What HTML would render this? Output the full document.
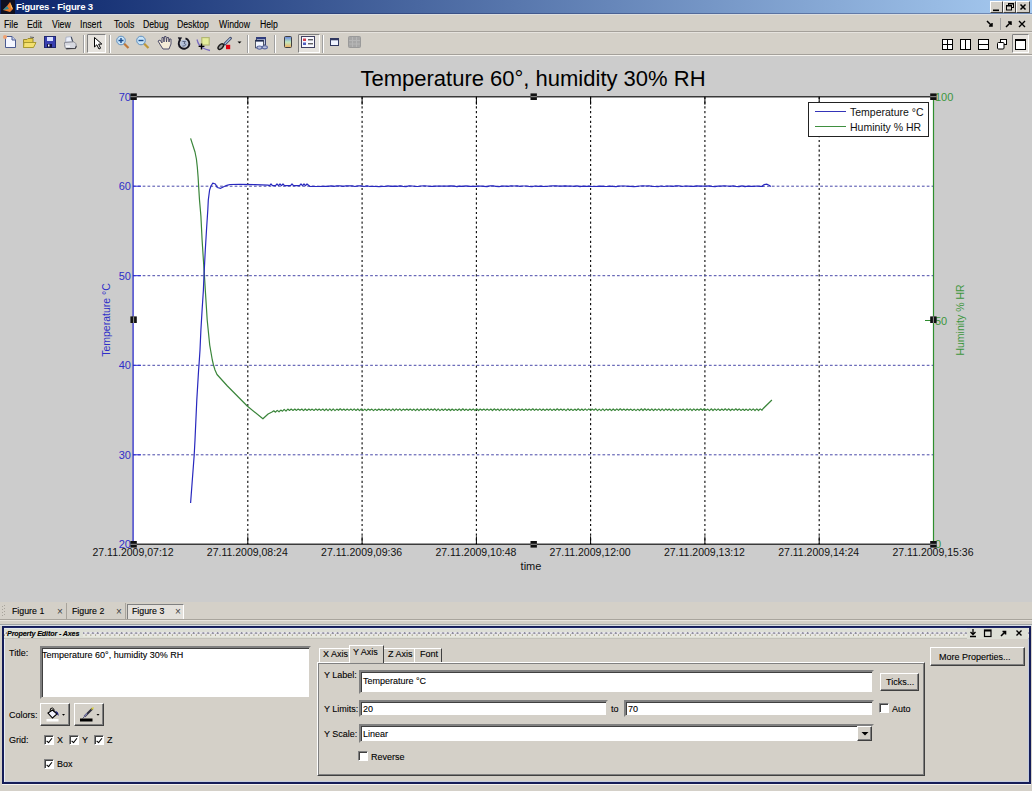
<!DOCTYPE html>
<html><head><meta charset="utf-8">
<style>
*{margin:0;padding:0;box-sizing:border-box}
html,body{width:1032px;height:791px;overflow:hidden;background:#D4D0C8;font-family:"Liberation Sans",sans-serif;font-size:11px;color:#000}
#menubar,#pe,#tabs{-webkit-text-stroke:0.1px #000}
.a{position:absolute}
#titlebar{left:0;top:0;width:1032px;height:14px;background:linear-gradient(to right,#0A246A,#A6CAF0);box-shadow:inset 0 -1px 0 rgba(20,30,80,0.35)}
#menubar{left:0;top:14px;width:1032px;height:18px;background:#D4D0C8;border-bottom:1px solid #A4A09A;border-top:1px solid #DCDEE0}
#toolbar{left:0;top:32px;width:1032px;height:23px;background:#D4D0C8;border-top:1px solid #E6E3DE;border-bottom:1px solid #A4A09A}
#fig{left:0;top:56px;width:1032px;height:546px;background:#CCCCCC;border-top:0}
#figline{left:0;top:55px;width:1032px;height:1px;background:#F4F2EE}
#tabs{left:0;top:602px;width:1032px;height:21px;background:#D4D0C8}
#pe{left:2px;top:626px;width:1029px;height:158px;border:2px solid #141C58;border-top-width:1px;background:#D4D0C8;box-shadow:inset 1px 1px 0 #E8ECF4, inset -1px -1px 0 #C4CCE0, 0 1px 0 #F4F2EE}
.menu span{position:absolute;top:4px;font-size:10px;line-height:11px;transform:scaleX(0.87);transform-origin:0 0}
.wb{width:13px;height:11px;background:#D4D0C8;border:1px solid;border-color:#fff #404040 #404040 #fff}
.wb svg{position:absolute;left:0;top:0}

#peh{left:0;top:0;width:1025px;height:12px;background:#DDDFD6;border-top:1px solid #1E2666;border-bottom:1px solid #C4C2BA;box-shadow:inset 0 1px 0 #E4E8EE}
#peh::after{content:"";position:absolute;left:0;top:4px;width:100%;height:5px;background-image:radial-gradient(circle at 2.5px 1.2px,#8C8A9C 0.8px,transparent 1.3px),radial-gradient(circle at 0px 3.3px,#A2A288 0.8px,transparent 1.3px),linear-gradient(#E8E6EE,#E8E8DC);background-size:4.8px 5px,4.8px 5px,100% 100%}
#pe{font-size:9px}
#pe .lbl{position:absolute;line-height:10px;white-space:nowrap}
.fld{position:absolute;background:#fff;border:2px solid;border-color:#808080 #D4D0C8 #D4D0C8 #808080;box-shadow:inset 1px 1px 0 #404040;line-height:10px;white-space:nowrap;overflow:hidden}
.btn{position:absolute;background:#D4D0C8;border:1px solid;border-color:#fff #404040 #404040 #fff;box-shadow:inset -1px -1px 0 #808080;line-height:10px;white-space:nowrap}
.cb{position:absolute;width:10px;height:10px;background:#fff;border:1px solid;border-color:#808080 #fff #fff #808080;box-shadow:inset 1px 1px 0 #404040}
.cb.on::after{content:"";position:absolute;left:2.5px;top:0.5px;width:2px;height:4.5px;border:solid #000;border-width:0 1.8px 1.8px 0;transform:rotate(38deg)}
.tab{position:absolute;background:#D4D0C8;border-top:1px solid #fff;border-left:1px solid #fff;line-height:10px}
.tab span{position:absolute;top:0px;white-space:nowrap}
.tab.sel{border-right:1px solid #404040;z-index:2}
.pane{position:absolute;border:1px solid;border-color:#fff #404040 #404040 #fff;box-shadow:inset -1px -1px 0 #808080, inset 1px 1px 0 #808080}
#tabs .t{position:absolute;top:4px;font-size:8.8px;line-height:11px}
#tabs .tx{position:absolute;top:3.5px;font-size:10px;line-height:11px;color:#404040;-webkit-text-stroke:0}
#tabs .tsep{position:absolute;top:1px;width:1px;height:16px;background:#A8A49C}
#tabs .tsel{position:absolute;left:127px;top:2px;width:57px;height:16px;border:1px solid;border-color:#808080 #fff #fff #808080;background:#E4E1DC}
</style></head><body>
<div id="titlebar" class="a">
<svg class="a" style="left:1px;top:0" width="14" height="14"><rect x="0" y="0" width="14" height="14" fill="#101020"/><path d="M2,10 L6,6 L9,2 L12,9 L9,12 Z" fill="#E8782A"/><path d="M2,10 L6,6 L8,9 Z" fill="#2A8A9A"/><path d="M9,2 L12,9 L10,8 Z" fill="#F8C060"/></svg>
<div class="a" style="left:16px;top:1px;font-size:9.6px;font-weight:bold;color:#fff;letter-spacing:-0.2px;line-height:12px">Figures - Figure 3</div>
<div class="a wb" style="left:990px;top:1px;height:12px"><svg width="12" height="10"><rect x="2" y="7.5" width="6" height="1.6" fill="#000"/></svg></div>
<div class="a wb" style="left:1003px;top:1px;height:12px"><svg width="12" height="10"><rect x="4.5" y="1.5" width="5" height="4" fill="none" stroke="#000"/><rect x="2.5" y="3.5" width="5" height="4.5" fill="#D4D0C8" stroke="#000"/><rect x="2" y="3" width="6" height="1.5" fill="#000"/><rect x="4" y="1" width="6" height="1.5" fill="#000"/></svg></div>
<div class="a wb" style="left:1016px;top:1px;width:14px;height:12px"><svg width="12" height="10"><path d="M3.5,2.5 L8.5,7.5 M8.5,2.5 L3.5,7.5" stroke="#000" stroke-width="1.5"/></svg></div>
</div>
<div id="menubar" class="a menu">
<span style="left:4px">File</span>
<span style="left:27px">Edit</span>
<span style="left:52px">View</span>
<span style="left:80px">Insert</span>
<span style="left:114px">Tools</span>
<span style="left:143px">Debug</span>
<span style="left:177px">Desktop</span>
<span style="left:219px">Window</span>
<span style="left:260px">Help</span>
<svg class="a" style="left:984px;top:3px" width="48" height="12">
<path d="M3,3 L8,8 M5,8 L8,8 L8,5" stroke="#000" stroke-width="1.5" fill="none"/>
<line x1="16.5" y1="0" x2="16.5" y2="12" stroke="#A0A0A0"/>
<path d="M22,9 L27,4 M24,4 L27,4 L27,7" stroke="#000" stroke-width="1.5" fill="none"/>
<path d="M35,3 L41,9 M41,3 L35,9" stroke="#000" stroke-width="1.4"/>
</svg>
</div>
<div id="toolbar" class="a">
<svg class="a" style="left:0;top:0" width="380" height="23" viewBox="0 32 380 23">
<line x1="83.5" y1="34" x2="83.5" y2="52" stroke="#A0A0A0"/><line x1="84.5" y1="34" x2="84.5" y2="52" stroke="#fff"/>
<rect x="87.5" y="33.5" width="18" height="18" fill="#E6E3DE" stroke="#FFFFFF"/>
<path d="M87.5,51.5 L87.5,33.5 L105.5,33.5" fill="none" stroke="#808080"/>
<line x1="109.5" y1="34" x2="109.5" y2="52" stroke="#A0A0A0"/><line x1="110.5" y1="34" x2="110.5" y2="52" stroke="#fff"/>
<line x1="247.5" y1="34" x2="247.5" y2="52" stroke="#A0A0A0"/><line x1="248.5" y1="34" x2="248.5" y2="52" stroke="#fff"/>
<line x1="274.5" y1="34" x2="274.5" y2="52" stroke="#A0A0A0"/><line x1="275.5" y1="34" x2="275.5" y2="52" stroke="#fff"/>
<defs><linearGradient id="cb" x1="0" y1="0" x2="0" y2="1"><stop offset="0" stop-color="#6080E0"/><stop offset="0.5" stop-color="#C0E8C0"/><stop offset="1" stop-color="#F0B060"/></linearGradient></defs>
<rect x="298.5" y="33.5" width="21" height="18" fill="#E6E3DE" stroke="#FFFFFF"/>
<path d="M298.5,51.5 L298.5,33.5 L319.5,33.5" fill="none" stroke="#808080"/>
<line x1="322.5" y1="34" x2="322.5" y2="52" stroke="#A0A0A0"/><line x1="323.5" y1="34" x2="323.5" y2="52" stroke="#fff"/>
<g transform="translate(0,-1)">
<!-- new -->
<path d="M5.5,36.5 L12,36.5 L15.5,40 L15.5,47.5 L5.5,47.5 Z" fill="#F4F6FF" stroke="#4A5A90"/>
<path d="M12,36.5 L12,40 L15.5,40" fill="#C8D0F0" stroke="#4A5A90"/>
<circle cx="5" cy="37" r="2" fill="#F0A070"/>
<!-- open -->
<path d="M23.5,39.5 L27,39.5 L28,38.5 L33,38.5 L33,47.5 L23.5,47.5 Z" fill="#E8D050" stroke="#9A8A30"/>
<path d="M24,42.5 L36,42.5 L33.5,47.5 L23.5,47.5 Z" fill="#F4E070" stroke="#A89A30"/>
<path d="M30,37 L34,37.5" stroke="#606060" stroke-width="1"/>
<!-- save -->
<rect x="44.5" y="36.5" width="11" height="11" fill="#3A40B0" stroke="#202870"/>
<rect x="47" y="37" width="6" height="4" fill="#D8E0FF"/>
<rect x="47" y="44" width="5" height="3.5" fill="#101040"/>
<rect x="48" y="44.5" width="1.5" height="2" fill="#fff"/>
<!-- print -->
<path d="M66,37.2 L71.2,36.6 L72.8,41.8 L65.6,42.2 Z" fill="#ECF0FA" stroke="#A0A8C0" stroke-width="0.8"/>
<path d="M71.2,36.8 L72.8,41.8" stroke="#404858" stroke-width="1.1"/>
<path d="M64.5,42.5 L74,41.8 Q76.6,43.4 76.4,46.2 L75.4,48.6 L66.2,49 Q64.4,47.4 64.5,44.5 Z" fill="#D6D8E0" stroke="#84868E" stroke-width="0.9"/>
<path d="M66.2,48.6 L75.4,48.3 L76.3,46" fill="none" stroke="#3E3E44" stroke-width="1.1"/>
<rect x="66" y="45.6" width="4" height="1.2" fill="#FFFFFF"/>
<!-- separator -->
<!-- pressed pointer button -->
<path d="M94.5,37.5 L94.5,47 L96.8,44.8 L99,49 L100.6,48.2 L98.6,44.2 L101.8,44 Z" fill="#fff" stroke="#000" stroke-width="1"/>
<!-- zoom in -->
<line x1="124" y1="43.5" x2="128.5" y2="48" stroke="#C07838" stroke-width="2.2"/>
<circle cx="121" cy="40.5" r="4.3" fill="#C8E4F8" stroke="#6090C0" stroke-width="1"/>
<path d="M118.5,40.5 L123.5,40.5 M121,38 L121,43" stroke="#1A4A8A" stroke-width="1.4"/>
<!-- zoom out -->
<line x1="144" y1="43.5" x2="148.5" y2="48" stroke="#C09838" stroke-width="2.2"/>
<circle cx="141" cy="40.5" r="4.3" fill="#C8E4F8" stroke="#6090C0" stroke-width="1"/>
<path d="M138.5,40.5 L143.5,40.5" stroke="#1A4A8A" stroke-width="1.4"/>
<!-- pan hand -->
<path d="M158,41 L161,46 L163,49 L169,49 L171,44 L171,39 L169.5,39 L169,42 L168.5,37.5 L167,37.5 L166.5,42 L166,36.5 L164.5,36.5 L164,42 L163.5,37.5 L162,37.5 L162,43 L160,40 Z" fill="#F4ECD8" stroke="#404060" stroke-width="0.9"/>
<!-- rotate -->
<circle cx="184" cy="43.5" r="3.8" fill="#B4C0D8"/>
<path d="M185.5,38.4 A5.3,5.3 0 1 1 180.25,39.75" fill="none" stroke="#151520" stroke-width="1.9"/>
<path d="M177.8,37.2 L182.2,37.6 L179.6,41.2 Z" fill="#151520"/>
<path d="M182.5,41.5 L185.5,41.5 L184,43.2 L185.8,44.5 L184.5,46 L182.5,46" fill="none" stroke="#5A6480" stroke-width="1"/>
<!-- data cursor -->
<rect x="201.8" y="37.6" width="7.4" height="7.4" fill="#E4EC9C" stroke="#B0B470" stroke-width="1.1"/>
<path d="M197,39.5 Q198.5,45.5 202,47.5 Q205.5,49.5 210,50.5" fill="none" stroke="#7A6CC0" stroke-width="1.3"/>
<path d="M198.6,46.4 L204.4,46.4 M201.5,43.5 L201.5,49.5" stroke="#000" stroke-width="1.4"/>
<!-- brush -->
<path d="M230.5,38.2 L224.8,44" stroke="#3A4060" stroke-width="2.8" stroke-linecap="round"/>
<path d="M230.2,38.5 L225.2,43.6" stroke="#A8C4E4" stroke-width="1.2" stroke-linecap="round"/>
<ellipse cx="220.8" cy="46.6" rx="3.4" ry="1.9" transform="rotate(-45 220.8 46.6)" fill="#9A9A9A" stroke="#1A1A1A" stroke-width="1.4"/>
<rect x="226" y="44.8" width="4.2" height="4.4" fill="#E00010"/>
<path d="M237.5,41.5 L241.5,41.5 L239.5,43.5 Z" fill="#000"/>
<!-- link -->
<rect x="256.5" y="37.5" width="9" height="7.5" fill="#C4CCE4" stroke="#3A4470" stroke-width="1"/>
<rect x="256.5" y="37.2" width="9" height="2" fill="#2E3C80"/>
<rect x="255.5" y="40.3" width="8" height="7.5" fill="#F2F6FF" stroke="#404858" stroke-width="0.9"/>
<rect x="255.5" y="40" width="8" height="1.6" fill="#1E2A50"/>
<ellipse cx="259.5" cy="47.6" rx="2.6" ry="1.6" fill="#B8C0DC" stroke="#5A68A0" stroke-width="1.1"/>
<ellipse cx="264.8" cy="47.3" rx="2.6" ry="1.6" fill="#B8C0DC" stroke="#5A68A0" stroke-width="1.1"/>
<!-- colorbar -->
<rect x="284.5" y="36.5" width="7" height="11" rx="1" fill="url(#cb)" stroke="#404040"/>
<!-- pressed legend button -->
<rect x="301.5" y="36.5" width="13" height="11" fill="#F8F8FF" stroke="#404060"/>
<rect x="303" y="38.5" width="3" height="2.5" fill="#D04050"/><rect x="303" y="42.5" width="3" height="2.5" fill="#5060C0"/>
<path d="M308,39.8 L313,39.8 M308,43.8 L313,43.8" stroke="#202020"/>
<!-- hide plot tools -->
<rect x="330.5" y="38.5" width="8" height="7" fill="#F0F4FF" stroke="#303860"/>
<rect x="330.5" y="38.5" width="8" height="1.8" fill="#303860"/>
<!-- show plot tools (disabled gray) -->
<rect x="348.5" y="36.5" width="12" height="11" rx="1" fill="#A6A6A6" stroke="#9A9A9A"/>
<path d="M352.5,37 L352.5,47 M356.5,37 L356.5,47 M349,40.5 L360,40.5 M349,44 L360,44" stroke="#B6B6B6"/>
</g>
</svg>
<svg class="a" style="left:932px;top:0" width="100" height="23" viewBox="932 32 100 23">
<rect x="942.5" y="38.5" width="10" height="10" fill="#fff" stroke="#000"/><path d="M947.5,38.5 L947.5,48.5 M942.5,43.5 L952.5,43.5" stroke="#000"/>
<rect x="960.5" y="38.5" width="10" height="10" fill="#fff" stroke="#000"/><path d="M965.5,38.5 L965.5,48.5" stroke="#000"/>
<rect x="978.5" y="38.5" width="10" height="10" fill="#fff" stroke="#000"/><path d="M978.5,43.5 L988.5,43.5" stroke="#000"/>
<rect x="1000.5" y="38.5" width="6" height="5" fill="#fff" stroke="#000"/><rect x="997.5" y="41.5" width="6.5" height="6.5" rx="1" fill="#fff" stroke="#000"/>
<rect x="1012.5" y="33.5" width="16" height="18" fill="#E6E3DE" stroke="#FFFFFF"/>
<path d="M1012.5,51.5 L1012.5,33.5 L1028.5,33.5" fill="none" stroke="#808080"/>
<rect x="1015.5" y="38.5" width="10" height="10" fill="#fff" stroke="#000"/><rect x="1015.5" y="38.5" width="10" height="1.5" fill="#000"/>
</svg>
</div>

<div id="figline" class="a"></div>
<div id="fig" class="a">
<svg width="1032" height="546" viewBox="0 56 1032 546" style="position:absolute;left:0;top:0">
<rect x="133" y="96.7" width="800" height="447.59999999999997" fill="#fff"/>
<line x1="247.8" y1="96.7" x2="247.8" y2="544.3" stroke="#111" stroke-width="1.15" stroke-dasharray="2.2 2.6"/>
<line x1="362.1" y1="96.7" x2="362.1" y2="544.3" stroke="#111" stroke-width="1.15" stroke-dasharray="2.2 2.6"/>
<line x1="476.4" y1="96.7" x2="476.4" y2="544.3" stroke="#111" stroke-width="1.15" stroke-dasharray="2.2 2.6"/>
<line x1="590.6" y1="96.7" x2="590.6" y2="544.3" stroke="#111" stroke-width="1.15" stroke-dasharray="2.2 2.6"/>
<line x1="704.9" y1="96.7" x2="704.9" y2="544.3" stroke="#111" stroke-width="1.15" stroke-dasharray="2.2 2.6"/>
<line x1="819.2" y1="96.7" x2="819.2" y2="544.3" stroke="#111" stroke-width="1.15" stroke-dasharray="2.2 2.6"/>
<line x1="133" y1="186.2" x2="933" y2="186.2" stroke="#4848A8" stroke-width="1" stroke-dasharray="2.7 2.14"/>
<line x1="133" y1="275.7" x2="933" y2="275.7" stroke="#4848A8" stroke-width="1" stroke-dasharray="2.7 2.14"/>
<line x1="133" y1="365.3" x2="933" y2="365.3" stroke="#4848A8" stroke-width="1" stroke-dasharray="2.7 2.14"/>
<line x1="133" y1="454.8" x2="933" y2="454.8" stroke="#4848A8" stroke-width="1" stroke-dasharray="2.7 2.14"/>
<path d="M190.6,138.4 L195.0,152.0 L196.4,159.0 L197.3,167.0 L198.1,177.0 L198.6,185.6 L199.5,200.0 L200.9,216.0 L202.1,240.0 L203.4,260.0 L204.7,280.0 L205.3,290.0 L207.2,320.0 L209.7,345.0 L212.3,360.0 L213.5,365.0 L215.0,370.0 L217.0,374.5 L227.4,386.0 L247.2,406.0 L262.9,418.8 L268.1,414.0 L272.0,412.0 L273.8,410.8 L275.5,412.2 L277.2,410.4 L279.0,411.8 L280.8,410.1 L282.5,411.2 L284.2,409.4 L286.0,411.1 L287.8,409.1 L289.5,410.4 L291.2,409.1 L293.0,410.4 L294.8,409.1 L296.5,410.4 L298.2,409.0 L300.0,410.3 L301.8,409.0 L303.5,410.6 L305.2,409.0 L307.0,410.5 L308.8,409.0 L310.5,410.3 L312.2,409.1 L314.0,410.5 L315.8,408.9 L317.5,410.3 L319.2,409.1 L321.0,410.4 L322.8,409.0 L324.5,410.6 L326.2,409.0 L328.0,410.6 L329.8,408.9 L331.5,410.6 L333.2,408.9 L335.0,410.6 L336.8,409.1 L338.5,410.3 L340.2,408.8 L342.0,410.3 L343.8,409.1 L345.5,410.4 L347.2,409.0 L349.0,410.4 L350.8,409.0 L352.5,410.4 L354.2,408.9 L356.0,410.5 L357.8,409.0 L359.5,410.6 L361.2,409.0 L363.0,410.6 L364.8,409.1 L366.5,410.6 L368.2,409.0 L370.0,410.3 L371.8,409.1 L373.5,410.6 L375.2,409.1 L377.0,410.5 L378.8,409.0 L380.5,410.3 L382.2,409.1 L384.0,410.5 L385.8,408.9 L387.5,410.3 L389.2,409.1 L391.0,410.6 L392.8,408.8 L394.5,410.6 L396.2,408.9 L398.0,410.3 L399.8,408.9 L401.5,410.6 L403.2,409.1 L405.0,410.3 L406.8,409.0 L408.5,410.3 L410.2,409.0 L412.0,410.4 L413.8,409.1 L415.5,410.6 L417.2,409.0 L419.0,410.6 L420.8,408.9 L422.5,410.3 L424.2,409.0 L426.0,410.3 L427.8,408.8 L429.5,410.4 L431.2,409.0 L433.0,410.3 L434.8,408.8 L436.5,410.6 L438.2,408.9 L440.0,410.6 L441.8,409.1 L443.5,410.4 L445.2,408.9 L447.0,410.5 L448.8,409.0 L450.5,410.5 L452.2,409.0 L454.0,410.5 L455.8,409.1 L457.5,410.5 L459.2,408.9 L461.0,410.5 L462.8,408.8 L464.5,410.4 L466.2,409.1 L468.0,410.5 L469.8,409.0 L471.5,410.3 L473.2,408.9 L475.0,410.5 L476.8,408.8 L478.5,410.5 L480.2,409.0 L482.0,410.3 L483.8,409.0 L485.5,410.4 L487.2,409.0 L489.0,410.4 L490.8,409.0 L492.5,410.5 L494.2,408.8 L496.0,410.3 L497.8,409.0 L499.5,410.6 L501.2,408.9 L503.0,410.4 L504.8,409.0 L506.5,410.4 L508.2,408.9 L510.0,410.4 L511.8,408.9 L513.5,410.5 L515.2,408.9 L517.0,410.4 L518.8,409.1 L520.5,410.3 L522.2,409.0 L524.0,410.5 L525.8,408.9 L527.5,410.3 L529.2,409.1 L531.0,410.3 L532.8,408.8 L534.5,410.4 L536.2,409.0 L538.0,410.3 L539.8,408.9 L541.5,410.4 L543.2,409.1 L545.0,410.4 L546.8,409.1 L548.5,410.3 L550.2,408.9 L552.0,410.5 L553.8,409.1 L555.5,410.4 L557.2,408.8 L559.0,410.3 L560.8,409.0 L562.5,410.3 L564.2,409.1 L566.0,410.6 L567.8,408.8 L569.5,410.4 L571.2,409.1 L573.0,410.5 L574.8,409.1 L576.5,410.4 L578.2,408.8 L580.0,410.4 L581.8,409.1 L583.5,410.4 L585.2,408.9 L587.0,410.4 L588.8,408.9 L590.5,410.4 L592.2,409.1 L594.0,410.3 L595.8,408.8 L597.5,410.6 L599.2,409.1 L601.0,410.6 L602.8,408.9 L604.5,410.6 L606.2,409.1 L608.0,410.3 L609.8,409.0 L611.5,410.6 L613.2,409.0 L615.0,410.5 L616.8,408.9 L618.5,410.4 L620.2,408.8 L622.0,410.3 L623.8,409.0 L625.5,410.4 L627.2,409.1 L629.0,410.3 L630.8,409.1 L632.5,410.5 L634.2,409.1 L636.0,410.6 L637.8,409.1 L639.5,410.5 L641.2,408.8 L643.0,410.5 L644.8,408.8 L646.5,410.4 L648.2,409.0 L650.0,410.5 L651.8,408.9 L653.5,410.6 L655.2,409.0 L657.0,410.4 L658.8,408.9 L660.5,410.6 L662.2,408.9 L664.0,410.6 L665.8,408.9 L667.5,410.3 L669.2,409.0 L671.0,410.6 L672.8,408.8 L674.5,410.6 L676.2,409.1 L678.0,410.6 L679.8,409.1 L681.5,410.3 L683.2,409.0 L685.0,410.6 L686.8,408.8 L688.5,410.4 L690.2,408.9 L692.0,410.5 L693.8,408.9 L695.5,410.4 L697.2,409.1 L699.0,410.3 L700.8,408.8 L702.5,410.3 L704.2,408.8 L706.0,410.3 L707.8,409.1 L709.5,410.6 L711.2,408.8 L713.0,410.5 L714.8,408.9 L716.5,410.4 L718.2,408.9 L720.0,410.5 L721.8,409.0 L723.5,410.4 L725.2,408.8 L727.0,410.4 L728.8,408.8 L730.5,410.5 L732.2,409.0 L734.0,410.4 L735.8,408.8 L737.5,410.3 L739.2,408.9 L741.0,410.5 L742.8,409.1 L744.5,410.4 L746.2,409.1 L748.0,410.5 L749.8,408.9 L751.5,410.4 L753.2,408.9 L755.0,410.5 L756.8,408.9 L758.5,410.5 L760.2,408.9 L762.0,410.3 L762.0,409.7 L771.9,400.0" fill="none" stroke="#3A853A" stroke-width="1.2" stroke-linejoin="round"/>
<path d="M190.6,503.0 L194.2,455.0 L195.0,440.0 L196.8,400.0 L198.6,370.0 L199.0,365.0 L200.0,350.0 L200.9,330.0 L202.1,310.0 L203.4,290.0 L204.0,275.0 L205.3,250.0 L206.5,230.0 L207.8,210.0 L208.3,200.0 L209.6,190.0 L211.0,186.0 L212.7,183.2 L215.4,184.0 L217.2,187.5 L220.7,188.3 L224.2,186.5 L226.9,185.3 L230.0,184.5 L240.0,184.3 L255.0,184.7 L268.0,185.2 L269.5,185.6 L271.0,184.0 L272.5,185.6 L274.0,185.6 L275.5,185.6 L277.0,184.0 L278.5,185.6 L280.0,184.0 L281.5,185.6 L283.0,184.0 L284.5,185.6 L286.0,185.6 L287.5,185.6 L289.0,185.6 L290.5,185.6 L292.0,184.0 L293.5,185.6 L295.0,185.6 L296.5,185.6 L298.0,185.6 L299.5,185.6 L301.0,184.0 L302.5,185.6 L304.0,184.0 L305.5,185.6 L307.0,184.0 L310.0,186.5 L313.0,186.3 L316.0,186.5 L319.0,186.5 L322.0,186.4 L325.0,186.4 L328.0,186.3 L331.0,185.8 L334.0,186.3 L337.0,185.8 L340.0,185.9 L343.0,186.4 L346.0,185.8 L349.0,185.8 L352.0,185.8 L355.0,186.5 L358.0,185.9 L361.0,185.8 L364.0,186.5 L367.0,185.9 L370.0,186.5 L373.0,186.4 L376.0,186.5 L379.0,186.6 L382.0,186.3 L385.0,186.5 L388.0,185.8 L391.0,186.4 L394.0,186.2 L397.0,186.4 L400.0,185.8 L403.0,186.4 L406.0,186.6 L409.0,185.8 L412.0,186.0 L415.0,186.3 L418.0,186.5 L421.0,186.0 L424.0,185.9 L427.0,186.0 L430.0,186.3 L433.0,186.4 L436.0,186.1 L439.0,186.1 L442.0,186.1 L445.0,186.1 L448.0,186.1 L451.0,185.8 L454.0,186.2 L457.0,186.6 L460.0,186.1 L463.0,186.4 L466.0,185.9 L469.0,186.4 L472.0,186.4 L475.0,186.4 L478.0,186.2 L481.0,186.2 L484.0,186.3 L487.0,186.6 L490.0,185.9 L493.0,185.8 L496.0,186.4 L499.0,186.6 L502.0,186.2 L505.0,186.1 L508.0,186.4 L511.0,185.9 L514.0,186.0 L517.0,185.9 L520.0,186.3 L523.0,186.0 L526.0,186.0 L529.0,186.4 L532.0,186.6 L535.0,186.0 L538.0,186.4 L541.0,186.1 L544.0,186.5 L547.0,186.3 L550.0,186.0 L553.0,185.9 L556.0,185.8 L559.0,186.2 L562.0,186.1 L565.0,185.9 L568.0,186.1 L571.0,186.0 L574.0,186.4 L577.0,185.9 L580.0,186.6 L583.0,186.2 L586.0,186.3 L589.0,186.2 L592.0,186.5 L595.0,186.5 L598.0,186.3 L601.0,186.2 L604.0,186.4 L607.0,186.5 L610.0,186.1 L613.0,186.4 L616.0,186.6 L619.0,186.2 L622.0,186.0 L625.0,186.0 L628.0,186.4 L631.0,186.4 L634.0,186.6 L637.0,186.5 L640.0,186.0 L643.0,185.9 L646.0,186.0 L649.0,185.9 L652.0,186.4 L655.0,186.5 L658.0,186.6 L661.0,186.0 L664.0,186.5 L667.0,186.0 L670.0,186.1 L673.0,186.4 L676.0,185.8 L679.0,185.8 L682.0,186.5 L685.0,186.0 L688.0,186.1 L691.0,186.3 L694.0,186.4 L697.0,185.8 L700.0,186.1 L703.0,186.1 L706.0,186.2 L709.0,185.9 L712.0,186.3 L715.0,186.6 L718.0,186.1 L721.0,186.2 L724.0,185.9 L727.0,186.0 L730.0,186.3 L733.0,185.9 L736.0,186.5 L739.0,186.6 L742.0,185.8 L745.0,186.6 L748.0,186.1 L751.0,186.4 L754.0,186.4 L757.0,186.0 L760.0,186.4 L763.0,186.3 L762.0,186.3 L764.0,184.6 L767.0,184.2 L769.0,185.2 L771.0,186.5" fill="none" stroke="#2828BE" stroke-width="1.2" stroke-linejoin="round"/>
<line x1="133" y1="96.7" x2="933" y2="96.7" stroke="#3A3A3A" stroke-width="1.4"/>
<line x1="133" y1="544.3" x2="933" y2="544.3" stroke="#3A3A3A" stroke-width="1.4"/>
<line x1="133.1" y1="96.7" x2="133.1" y2="544.3" stroke="#2E2EC8" stroke-width="1.3"/>
<line x1="933.5" y1="96.7" x2="933.5" y2="544.3" stroke="#2E8E2E" stroke-width="1.2"/>
<line x1="247.8" y1="536.3" x2="247.8" y2="544.3" stroke="#000" stroke-width="1"/>
<line x1="247.8" y1="96.7" x2="247.8" y2="104.7" stroke="#000" stroke-width="1"/>
<line x1="362.1" y1="536.3" x2="362.1" y2="544.3" stroke="#000" stroke-width="1"/>
<line x1="362.1" y1="96.7" x2="362.1" y2="104.7" stroke="#000" stroke-width="1"/>
<line x1="476.4" y1="536.3" x2="476.4" y2="544.3" stroke="#000" stroke-width="1"/>
<line x1="476.4" y1="96.7" x2="476.4" y2="104.7" stroke="#000" stroke-width="1"/>
<line x1="590.6" y1="536.3" x2="590.6" y2="544.3" stroke="#000" stroke-width="1"/>
<line x1="590.6" y1="96.7" x2="590.6" y2="104.7" stroke="#000" stroke-width="1"/>
<line x1="704.9" y1="536.3" x2="704.9" y2="544.3" stroke="#000" stroke-width="1"/>
<line x1="704.9" y1="96.7" x2="704.9" y2="104.7" stroke="#000" stroke-width="1"/>
<line x1="819.2" y1="536.3" x2="819.2" y2="544.3" stroke="#000" stroke-width="1"/>
<line x1="819.2" y1="96.7" x2="819.2" y2="104.7" stroke="#000" stroke-width="1"/>
<line x1="133" y1="186.2" x2="141" y2="186.2" stroke="#2828D8" stroke-width="1"/>
<line x1="133" y1="275.7" x2="141" y2="275.7" stroke="#2828D8" stroke-width="1"/>
<line x1="133" y1="365.3" x2="141" y2="365.3" stroke="#2828D8" stroke-width="1"/>
<line x1="133" y1="454.8" x2="141" y2="454.8" stroke="#2828D8" stroke-width="1"/>
<line x1="925" y1="320.5" x2="933" y2="320.5" stroke="#2E8B2E" stroke-width="1"/>
<text x="131" y="100.7" text-anchor="end" fill="#2F2FC8" font-size="11">70</text>
<text x="131" y="190.2" text-anchor="end" fill="#2F2FC8" font-size="11">60</text>
<text x="131" y="279.7" text-anchor="end" fill="#2F2FC8" font-size="11">50</text>
<text x="131" y="369.3" text-anchor="end" fill="#2F2FC8" font-size="11">40</text>
<text x="131" y="458.8" text-anchor="end" fill="#2F2FC8" font-size="11">30</text>
<text x="131" y="548.3" text-anchor="end" fill="#2F2FC8" font-size="11">20</text>
<text x="935" y="100.7" fill="#3C963C" font-size="11">100</text>
<text x="935" y="324.5" fill="#3C963C" font-size="11">50</text>
<text x="935" y="548.3" fill="#3C963C" font-size="11">0</text>
<text x="133.0" y="556.3" text-anchor="middle" fill="#111" font-size="10.5">27.11.2009,07:12</text>
<text x="247.3" y="556.3" text-anchor="middle" fill="#111" font-size="10.5">27.11.2009,08:24</text>
<text x="361.6" y="556.3" text-anchor="middle" fill="#111" font-size="10.5">27.11.2009,09:36</text>
<text x="475.9" y="556.3" text-anchor="middle" fill="#111" font-size="10.5">27.11.2009,10:48</text>
<text x="590.1" y="556.3" text-anchor="middle" fill="#111" font-size="10.5">27.11.2009,12:00</text>
<text x="704.4" y="556.3" text-anchor="middle" fill="#111" font-size="10.5">27.11.2009,13:12</text>
<text x="818.7" y="556.3" text-anchor="middle" fill="#111" font-size="10.5">27.11.2009,14:24</text>
<text x="933.0" y="556.3" text-anchor="middle" fill="#111" font-size="10.5">27.11.2009,15:36</text>
<text x="531" y="570" text-anchor="middle" fill="#111" font-size="11">time</text>
<text x="533" y="86" text-anchor="middle" fill="#000" font-size="22">Temperature 60°, humidity 30% RH</text>
<text transform="translate(110,320) rotate(-90)" text-anchor="middle" fill="#2F2FC8" font-size="10.5">Temperature °C</text>
<text transform="translate(964,320) rotate(-90)" text-anchor="middle" fill="#3C963C" font-size="10.5">Huminity % HR</text>
<rect x="808.5" y="102.5" width="120" height="34" fill="#fff" stroke="#222" stroke-width="1"/>
<line x1="815" y1="111.5" x2="846" y2="111.5" stroke="#3434B8" stroke-width="1"/>
<line x1="815" y1="126.5" x2="846" y2="126.5" stroke="#3F8F3F" stroke-width="1"/>
<text x="850" y="116" fill="#111" font-size="10.5">Temperature °C</text>
<text x="850" y="131" fill="#111" font-size="10.5">Huminity % HR</text>
<rect x="130.4" y="93.4" width="6.4" height="6.6" fill="#111"/>
<line x1="130.4" y1="96.7" x2="136.8" y2="96.7" stroke="#999" stroke-width="1"/>
<rect x="130.4" y="316.4" width="6.4" height="6.6" fill="#111"/>
<line x1="133.6" y1="316.4" x2="133.6" y2="323.0" stroke="#999" stroke-width="1"/>
<rect x="130.4" y="541.0" width="6.4" height="6.6" fill="#111"/>
<line x1="130.4" y1="544.3" x2="136.8" y2="544.3" stroke="#999" stroke-width="1"/>
<rect x="530.5" y="93.4" width="6.4" height="6.6" fill="#111"/>
<line x1="530.5" y1="96.7" x2="536.9" y2="96.7" stroke="#999" stroke-width="1"/>
<rect x="530.5" y="541.0" width="6.4" height="6.6" fill="#111"/>
<line x1="530.5" y1="544.3" x2="536.9" y2="544.3" stroke="#999" stroke-width="1"/>
<rect x="930.2" y="93.4" width="6.4" height="6.6" fill="#111"/>
<line x1="930.2" y1="96.7" x2="936.6" y2="96.7" stroke="#999" stroke-width="1"/>
<rect x="930.2" y="316.4" width="6.4" height="6.6" fill="#111"/>
<line x1="933.4" y1="316.4" x2="933.4" y2="323.0" stroke="#999" stroke-width="1"/>
<rect x="930.2" y="541.0" width="6.4" height="6.6" fill="#111"/>
<line x1="930.2" y1="544.3" x2="936.6" y2="544.3" stroke="#999" stroke-width="1"/>
</svg>
</div>
<div id="tabs" class="a">
<svg class="a" style="left:0;top:0" width="8" height="18"><g fill="#A8A49C"><rect x="2" y="4" width="1" height="1"/><rect x="4" y="3" width="1" height="1"/><rect x="2" y="7" width="1" height="1"/><rect x="4" y="6" width="1" height="1"/><rect x="2" y="10" width="1" height="1"/><rect x="4" y="9" width="1" height="1"/><rect x="2" y="13" width="1" height="1"/><rect x="4" y="12" width="1" height="1"/></g></svg>
<div class="t" style="left:12px">Figure 1</div><div class="tx" style="left:57px">×</div>
<div class="tsep" style="left:66px"></div>
<div class="t" style="left:72px">Figure 2</div><div class="tx" style="left:116px">×</div>
<div class="tsep" style="left:125px"></div>
<div class="tsel"></div>
<div class="t" style="left:132px">Figure 3</div><div class="tx" style="left:175px">×</div>
<div class="a" style="left:0;top:17px;width:1032px;height:1px;background:#A8A49C"></div>
<div class="a" style="left:0;top:18px;width:1032px;height:1px;background:#E8E4DE"></div>
<div class="a" style="left:0;top:22px;width:1032px;height:1px;background:#A0A4A4"></div>
<div class="a" style="left:0;top:23px;width:1032px;height:1px;background:#DCE0E6"></div>
</div>
<div id="pe" class="a">
<div class="a" id="peh"></div>
<div class="a" style="left:3px;top:2px;font-size:7.2px;font-weight:bold;font-style:italic;line-height:9px;background:#DDDFD6;padding-right:4px;letter-spacing:-0.15px">Property Editor - Axes</div>
<svg class="a" style="left:963px;top:1px;background:#DDDFD6" width="61" height="11">
<path d="M6,1 L6,6 M3.5,4 L6,6.5 L8.5,4 M3,8.5 L9,8.5" stroke="#000" stroke-width="1.3" fill="none"/>
<rect x="17.5" y="2" width="6.5" height="6.5" fill="none" stroke="#000" stroke-width="1.2"/><rect x="17.5" y="2" width="6.5" height="1.5" fill="#000"/>
<path d="M34,8 L38,4 M35.5,3.5 L38.5,3.5 L38.5,6.5" stroke="#000" stroke-width="1.6" fill="none"/>
<path d="M49.5,2.5 L54.5,7.5 M54.5,2.5 L49.5,7.5" stroke="#000" stroke-width="1.4"/>
</svg>
<div class="lbl" style="left:5px;top:21px">Title:</div>
<div class="fld" style="left:36px;top:19px;width:271px;height:53px"><div style="position:absolute;left:0px;top:2px">Temperature 60°, humidity 30% RH</div></div>
<div class="lbl" style="left:5px;top:83px">Colors:</div>
<div class="btn" style="left:36px;top:76px;width:30px;height:23px">
<svg class="a" style="left:0;top:0" width="30" height="23"><path d="M7,9 L11.5,6 L16,10 L11.5,14 Z" fill="#F4F4FF" stroke="#000" stroke-width="1.1"/><path d="M9,7 Q9,3.5 11.5,4 Q13.5,4.5 13,7.5" fill="none" stroke="#000" stroke-width="1"/><path d="M14,7 Q18,7.5 17.5,12 L16,10 Z" fill="#1A1A70"/><rect x="5.5" y="15" width="12" height="2.5" fill="#FFFFFF"/><path d="M21,10 L24,10 L22.5,11.8 Z" fill="#000"/></svg>
</div>
<div class="btn" style="left:70px;top:76px;width:30px;height:23px">
<svg class="a" style="left:0;top:0" width="30" height="23"><path d="M17.5,4.5 L9.5,12.5" stroke="#303040" stroke-width="2.2"/><path d="M16.5,5.5 L18.5,3.5" stroke="#D8D040" stroke-width="1.6"/><path d="M12,9.5 L9,13" stroke="#8080B0" stroke-width="1.2"/><path d="M9.5,12.5 L7.5,14.5" stroke="#606080" stroke-width="1"/><rect x="5" y="14.5" width="12.5" height="3" fill="#000"/><path d="M21.5,10 L24.5,10 L23,11.8 Z" fill="#000"/></svg>
</div>
<div class="lbl" style="left:5px;top:108px">Grid:</div>
<div class="cb on" style="left:40px;top:108px"></div><div class="lbl" style="left:53px;top:108px">X</div>
<div class="cb on" style="left:65px;top:108px"></div><div class="lbl" style="left:78px;top:108px">Y</div>
<div class="cb on" style="left:90px;top:108px"></div><div class="lbl" style="left:103px;top:108px">Z</div>
<div class="cb on" style="left:40px;top:132px"></div><div class="lbl" style="left:53px;top:132px">Box</div>
<!-- tab pane -->
<div class="tab" style="left:315px;top:21px;width:30px;height:14px"><span style="left:3px">X Axis</span></div>
<div class="tab" style="left:379px;top:21px;width:32px;height:14px;border-right:1px solid #404040"><span style="left:4px">Z Axis</span></div>
<div class="tab" style="left:410px;top:21px;width:28px;height:14px;border-right:1px solid #404040"><span style="left:5px">Font</span></div>
<div class="pane" style="left:313px;top:35px;width:608px;height:114px"></div>
<div class="tab sel" style="left:345px;top:18px;width:35px;height:18px;border-bottom:none"><span style="left:3px;top:1px">Y Axis</span></div>
<div class="lbl" style="left:320px;top:43px">Y Label:</div>
<div class="fld" style="left:355px;top:43px;width:515px;height:24px"><div style="position:absolute;left:2px;top:4px">Temperature °C</div></div>
<div class="btn" style="left:876px;top:46px;width:39px;height:18px"><span class="a" style="left:5px;top:3px">Ticks...</span></div>
<div class="lbl" style="left:320px;top:77px">Y Limits:</div>
<div class="fld" style="left:355px;top:73px;width:249px;height:17px"><div style="position:absolute;left:2px;top:2px">20</div></div>
<div class="lbl" style="left:607px;top:77px">to</div>
<div class="fld" style="left:620px;top:73px;width:250px;height:17px"><div style="position:absolute;left:2px;top:2px">70</div></div>
<div class="cb" style="left:875px;top:76px"></div><div class="lbl" style="left:888px;top:77px">Auto</div>
<div class="lbl" style="left:320px;top:101.5px">Y Scale:</div>
<div class="fld" style="left:355px;top:97px;width:515px;height:19px"><div style="position:absolute;left:2px;top:3px">Linear</div>
<div class="btn" style="left:496px;top:0px;width:15px;height:15px"><svg class="a" style="left:0;top:0" width="15" height="15"><path d="M3.5,5 L10.5,5 L7,8.5 Z" fill="#000"/></svg></div></div>
<div class="cb" style="left:354px;top:124px"></div><div class="lbl" style="left:367px;top:124.5px">Reverse</div>
<div class="btn" style="left:926px;top:20px;width:95px;height:19px"><span class="a" style="left:8px;top:3.5px">More Properties...</span></div>
</div>

</body></html>
